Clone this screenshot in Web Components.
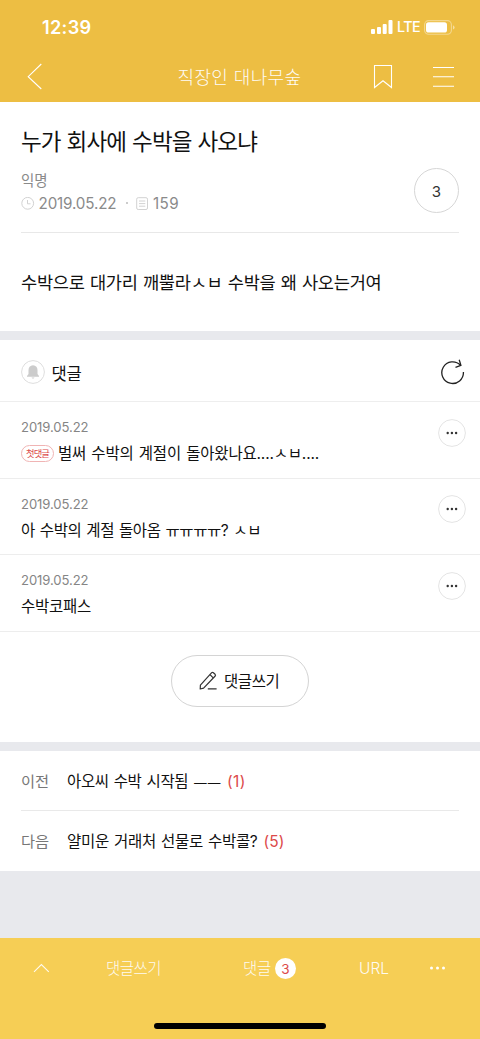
<!DOCTYPE html>
<html lang="ko">
<head>
<meta charset="utf-8">
<title>직장인 대나무숲</title>
<style>
html,body{margin:0;padding:0}
body{width:480px;height:1039px;overflow:hidden;background:#e8e9ed;font-family:"Inter","Noto Sans CJK KR",sans-serif;color:#111}
</style>
</head>
<body>
<bamboo-page></bamboo-page>
<script>
const define = (name, html) => customElements.define(name, class extends HTMLElement {
  constructor() {
    super();
    this.attachShadow({ mode: 'open' }).innerHTML = html;
  }
});

/* One line of text whose tracking is tuned so it spans the given width. */
customElements.define('fit-text', class extends HTMLElement {
  constructor() {
    super();
    this.attachShadow({ mode: 'open' }).innerHTML =
      '<style>:host{display:inline-block;white-space:pre;line-height:24px;flex:none}span{display:inline-block}</style><span><slot></slot></span>';
  }
  connectedCallback() {
    this.style.fontSize = this.getAttribute('size') + 'px';
    const target = Number(this.getAttribute('w'));
    if (!target) return;
    const span = this.shadowRoot.querySelector('span');
    const n = [...this.textContent].length;
    span.style.letterSpacing = (target - span.getBoundingClientRect().width) / n + 'px';
    this.style.width = target + 'px';
  }
});

define('status-bar', `
<style>:host{display:flex;height:51px;box-sizing:border-box;padding:3px 25px 0 42px;align-items:center;justify-content:space-between;color:#fff}
.t{font-weight:600}div{display:flex;align-items:center}svg{display:block}.l{font-weight:500;margin:0 4px 0 4px}</style>
<fit-text class="t" size="18.2" w="49.5">12:39</fit-text>
<div><svg width="22" height="14" viewBox="0 0 22 14" fill="#fff"><rect x="0" y="9" width="4" height="5" rx="1"/><rect x="6" y="7" width="4" height="7" rx="1"/><rect x="11.7" y="4" width="4" height="10" rx="1"/><rect x="17.5" y="0" width="4" height="14" rx="1"/></svg>
<fit-text class="l" size="14.3" w="23">LTE</fit-text>
<svg width="31" height="15" viewBox="0 0 31 15"><rect x=".6" y=".6" width="26.8" height="13.6" rx="4" fill="none" stroke="#fff" stroke-opacity=".4" stroke-width="1.1"/><rect x="2" y="2.2" width="21" height="10.4" rx="2.6" fill="#fff"/><path d="M29 5.2Q30.6 6 30.6 7.4T29 9.6z" fill="#fff" fill-opacity=".5"/></svg></div>`);

define('nav-bar', `
<style>:host{display:grid;grid-template-columns:160px 160px 160px;height:51px;align-items:center;color:#fff}
fit-text{font-weight:300;justify-self:center;opacity:.95;margin-left:-1px;margin-top:2px}
svg{display:block;fill:none;stroke:#fff;stroke-width:1.1}.b{margin-left:27px}.r{display:flex;align-items:center;justify-content:flex-end;gap:39px;padding-right:25.5px}</style>
<svg class="b" width="16" height="27" viewBox="0 0 16 27"><path d="M14.3 1L1.2 13.7L14.3 26"/></svg>
<fit-text size="18" w="124">직장인 대나무숲</fit-text>
<div class="r"><svg width="20" height="25" viewBox="0 0 20 25"><path d="M1.5 1.5H18.5V23.5L10 16.8L1.5 23.5Z"/></svg>
<svg width="23" height="24" viewBox="0 0 23 24"><path d="M1 2.5H22M1 11.8H22M1 21.2H22"/></svg></div>`);

define('post-article', `
<style>:host{display:block;box-sizing:border-box;height:229px;padding:28px 21px 0 21px;background:#fff}
h1,p{margin:0;font-weight:400;font-size:0;height:24px}.info{display:flex;justify-content:space-between;height:78px;border-bottom:1px solid #e8e8e8}
.name{display:block;margin-top:15px;color:#8a8a8a}.meta{display:flex;align-items:center;height:24px;color:#8a8a8a;margin-top:-1px}
.meta svg{display:block;fill:none;stroke:#d2d2d2;margin-top:-1px}.dot{width:2px;height:2px;border-radius:1px;background:#bbb;margin:-2px 8.5px 0 9px}
.c{box-sizing:border-box;width:45px;height:45px;border:1px solid #d6d6d6;border-radius:50%;display:flex;align-items:center;justify-content:center;margin-top:14px;color:#333;padding-top:2px}
p{margin-top:38px}</style>
<h1><fit-text size="22.5" w="236" style="word-spacing:.5px">누가 회사에 수박을 사오냐</fit-text></h1>
<div class="info"><div><fit-text class="name" size="14.5" w="26.5">익명</fit-text>
<div class="meta"><svg width="14" height="14" viewBox="0 0 14 14"><circle cx="6.7" cy="6.3" r="5.9"/><path d="M6.5 3V6.8H9.5"/></svg>
<fit-text size="15.2" w="78" style="margin-left:3.5px">2019.05.22</fit-text><span class="dot"></span>
<svg width="13" height="14" viewBox="0 0 13 14"><rect x=".7" y=".7" width="10.8" height="11.8" rx="1.5"/><path d="M3 4H9.3M3 6.6H9.3M3 9.2H9.3"/></svg>
<fit-text size="15.2" w="26" style="margin-left:4px">159</fit-text></div></div>
<div class="c"><fit-text size="15">3</fit-text></div></div>
<p><fit-text size="17.6" w="360.5" style="word-spacing:.6px">수박으로 대가리 깨뿔라ㅅㅂ 수박을 왜 사오는거여</fit-text></p>`);

define('comments-head', `
<style>:host{display:flex;align-items:center;box-sizing:border-box;height:62px;padding:3px 15px 0 21px;background:#fff;border-bottom:1px solid #eee}
svg{display:block}fit-text{margin:3px 0 0 6.5px}.r{margin-left:auto}</style>
<svg width="24" height="24" viewBox="0 0 24 24"><circle cx="12" cy="12" r="11.4" fill="#fff" stroke="#dedede"/><path d="M12 5.2C9 5.2 7.5 7.4 7.5 10V14L6 16V16.7H18V16L16.5 14V10C16.5 7.4 15 5.2 12 5.2ZM10.4 17.5H13.6Q12 19.8 10.4 17.5Z" fill="#ccc"/></svg>
<fit-text size="16.6" w="30">댓글</fit-text>
<svg class="r" width="25" height="26" viewBox="0 0 25 26" fill="none" stroke="#222" stroke-width="1.3"><path d="M23.4 13A10.8 10.8 0 1 1 20.5 6.3"/><path d="M19.2 .8L20.9 6.4L15.5 8.3"/></svg>`);

define('comment-row', `
<style>:host{display:flex;justify-content:space-between;box-sizing:border-box;height:76.5px;padding:13px 14px 0 21px;background:#fff;border-bottom:1px solid #ededed}
.d{color:#858585;display:block}.b{display:flex;align-items:center;margin-top:2.5px;height:24px}
.m{display:block;margin-top:3.5px}::slotted(fit-text){margin-top:1px}</style>
<div><fit-text class="d" size="13.1" w="67.5">2019.05.22</fit-text><div class="b"><slot></slot></div></div>
<svg class="m" width="28" height="28" viewBox="0 0 28 28"><circle cx="14" cy="14" r="13.4" fill="#fff" stroke="#e4e4e4"/><g fill="#333"><circle cx="9.7" cy="14" r="1.2"/><circle cx="13.9" cy="14" r="1.2"/><circle cx="18.1" cy="14" r="1.2"/></g></svg>`);

define('first-badge', `
<style>:host{display:flex;box-sizing:border-box;width:33px;height:17px;border:1px solid #f0b4b4;border-radius:9px;align-items:center;justify-content:center;color:#dc4c4c;margin-right:4px}</style>
<fit-text size="9.3" w="23" style="line-height:14px">첫댓글</fit-text>`);

define('write-area', `
<style>:host{display:flex;box-sizing:border-box;height:110.5px;padding-top:23.5px;justify-content:center;background:#fff}
div{box-sizing:border-box;width:138px;height:52px;border:1px solid #d4d4d4;border-radius:26px;display:flex;align-items:center;padding-left:27px;gap:6px}svg{display:block}fit-text{margin-top:2px}</style>
<div><svg width="19" height="20" viewBox="0 0 19 20" fill="none" stroke="#333" stroke-width="1.2" stroke-linejoin="round"><path d="M1.4 14.2L12.7 1.6Q13.5 .9 14.4 1.7L16.1 3.3Q16.9 4.1 16.2 5L4.6 17.2L1.2 18Z"/><path d="M11 3.7L14.2 6.9M8.8 17.9H17.6"/></svg>
<fit-text size="15.5" w="55.5">댓글쓰기</fit-text></div>`);

define('neighbor-list', `
<style>:host{display:block;box-sizing:border-box;height:120px;background:#fff;padding:0 21px}
div{display:flex;align-items:center;height:60px;box-sizing:border-box;padding-top:2px}.first{border-bottom:1px solid #e9e9e9}
.k{color:#777;margin-right:18px}.n{color:#dc4a4a;margin-left:6px}.low{position:relative;top:3px}</style>
<div class="first"><fit-text class="k" size="15.3" w="28">이전</fit-text><fit-text size="15.5" w="154" style="word-spacing:1px">아오씨 수박 시작됨 <span class="low">ㅡㅡ</span></fit-text><fit-text class="n" size="15.5" w="19">(1)</fit-text></div>
<div><fit-text class="k" size="15.3" w="28">다음</fit-text><fit-text size="15.5" w="190.5" style="word-spacing:1px">얄미운 거래처 선물로 수박콜?</fit-text><fit-text class="n" size="15.5" w="21">(5)</fit-text></div>`);

define('bottom-bar', `
<style>:host{display:flex;flex-direction:column;box-sizing:border-box;height:101px;background:#f6ce55;color:#fff;align-items:center}
.row{display:flex;width:480px;height:61px;align-items:center;box-sizing:border-box;padding-left:33px}svg{display:block;margin-top:-1px}
fit-text{font-weight:300;opacity:.92}
.n{width:21px;height:21px;border-radius:50%;background:#fff;color:#dc4a4a;display:flex;align-items:center;justify-content:center;margin-left:4px}.n fit-text{opacity:1;font-weight:400}
.home{width:172px;height:6px;border-radius:3px;background:#000;margin-top:24px}</style>
<div class="row"><svg width="17" height="10" viewBox="0 0 17 10" fill="none" stroke="#fff" stroke-width="1.1" stroke-opacity=".9"><path d="M1 8.8L8.4 1.5L15.8 8.8"/></svg>
<fit-text size="15.5" w="55" style="margin-left:56px">댓글쓰기</fit-text>
<fit-text size="15.5" w="28" style="margin-left:82px">댓글</fit-text><span class="n"><fit-text size="13.5">3</fit-text></span>
<fit-text size="15.5" w="30" style="margin-left:63px">URL</fit-text>
<svg width="17" height="6" viewBox="0 0 17 6" fill="#fff" style="margin-left:40px"><circle cx="2.5" cy="3" r="1.5"/><circle cx="8.5" cy="3" r="1.5"/><circle cx="14.5" cy="3" r="1.5"/></svg></div>
<div class="home"></div>`);

define('bamboo-page', `
<style>:host{display:flex;flex-direction:column;width:480px;height:1039px;background:#e8e9ed}
header{background:#edbe43;height:102px;flex:none}.gap{height:9px;flex:none}bottom-bar{margin-top:auto}
post-article,comments-head,comment-row,write-area,neighbor-list,bottom-bar{flex:none}.low{position:relative;top:1px}</style>
<header><status-bar></status-bar><nav-bar></nav-bar></header>
<post-article></post-article><div class="gap"></div>
<comments-head></comments-head>
<comment-row><first-badge></first-badge><fit-text size="15.5" w="261" style="word-spacing:1px">벌써 수박의 계절이 돌아왔나요....ㅅㅂ....</fit-text></comment-row>
<comment-row><fit-text size="15.5" w="240" style="word-spacing:1px">아 수박의 계절 돌아옴 <span class="low">ㅠㅠㅠㅠ</span>? ㅅㅂ</fit-text></comment-row>
<comment-row><fit-text size="15.5" w="70">수박코패스</fit-text></comment-row>
<write-area></write-area><div class="gap"></div>
<neighbor-list></neighbor-list><bottom-bar></bottom-bar>`);
</script>
</body>
</html>
